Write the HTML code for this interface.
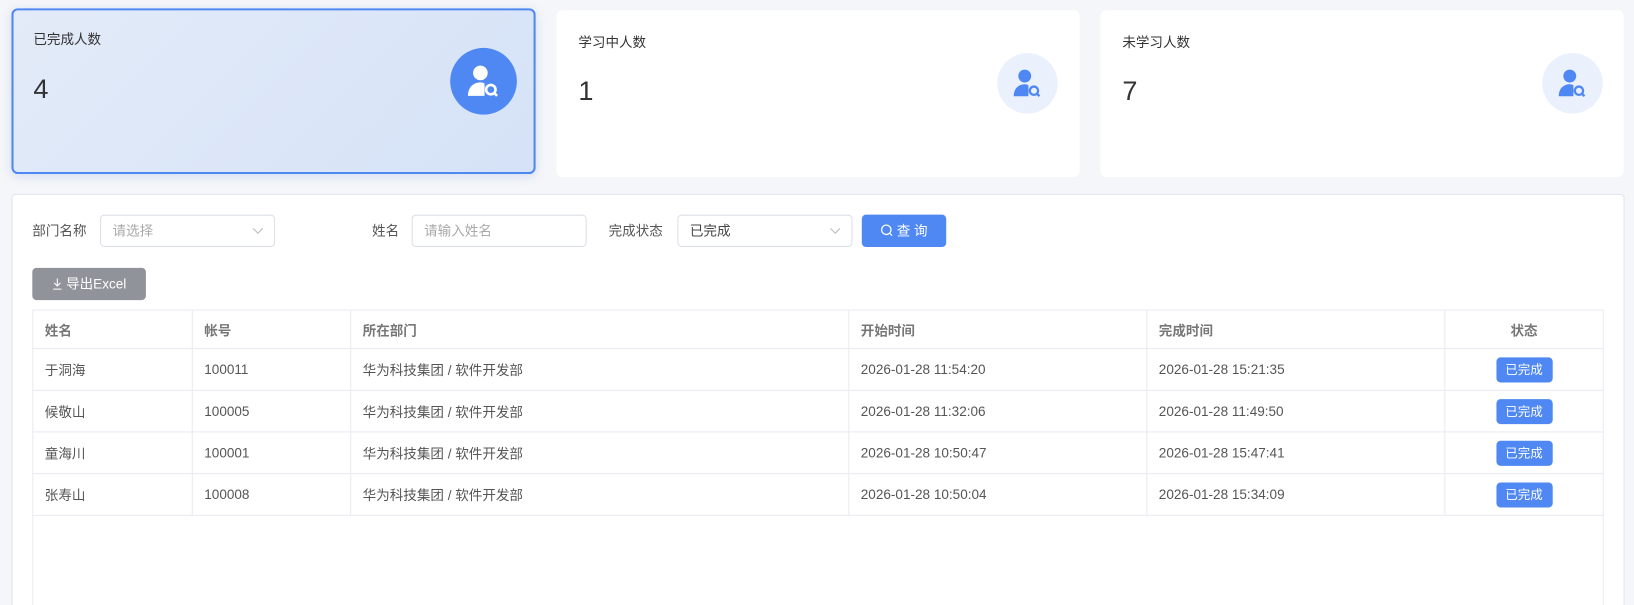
<!DOCTYPE html>
<html><head><meta charset="utf-8"><style>
*{box-sizing:border-box;margin:0;padding:0}
html,body{width:1634px;height:605px;overflow:hidden;background:#f5f6f9}
#w{width:1568px;height:581px;overflow:hidden;transform:scale(1.04209);transform-origin:0 0;position:relative;font-family:"Liberation Sans","Noto Sans CJK SC",sans-serif;color:#333}
.abs{position:absolute}
.card{position:absolute;background:#fff;border-radius:6px}
.card .t{position:absolute;left:21px;top:20px;font-size:13px;color:#333}
.card .n{position:absolute;left:21px;top:62px;font-size:26px;color:#333}
.circ{position:absolute;border-radius:50%;display:flex;align-items:center;justify-content:center}
.lbl{position:absolute;font-size:13px;color:#555;line-height:31px}
.inp{position:absolute;height:31px;border:1px solid #dcdfe6;border-radius:4px;background:#fff;font-size:13px;padding-left:11px;line-height:29px;color:#aaa}
.chev{position:absolute;right:12px;top:9px;width:7px;height:7px;border-right:1px solid #bbb;border-bottom:1px solid #bbb;transform:rotate(45deg)}
table{position:absolute;left:31px;top:297px;width:1508px;border-collapse:collapse;font-size:13px}
td,th{border:1px solid #e8eaf2;height:40px;padding-left:11px;text-align:left;color:#555;font-weight:normal}
th{height:37px;color:#777;font-weight:bold}
.tag{display:inline-block;background:#4f88f2;color:#fff;font-size:12px;border-radius:4px;width:54px;height:24px;line-height:24px;text-align:center}
</style></head><body><div id="w">
<div class="card" style="left:11px;top:8px;width:503px;height:159px;border:2px solid #4f88f2;background:linear-gradient(135deg,#e3ebf8,#d5e2f7);box-shadow:0 2px 10px rgba(80,130,220,.2)">
<div class="t" style="left:19px;top:17px">已完成人数</div><div class="n" style="left:19px;top:60px">4</div>
<div class="circ" style="left:419px;top:36px;width:64px;height:64px;background:#4f88f2">
<svg width="34" height="34" viewBox="0 0 34 34"><circle cx="14" cy="9" r="7" fill="#fff"/><path d="M2 31 C2 22 8 18 14 18 C16 18 17 18.5 18 19 L18 31 Z" fill="#fff"/><circle cx="24" cy="25" r="4.5" fill="none" stroke="#fff" stroke-width="2.5"/><path d="M27 28 L30 31" stroke="#fff" stroke-width="2.5"/></svg></div>
</div>
<div class="card" style="left:534px;top:10px;width:502px;height:160px">
<div class="t">学习中人数</div><div class="n">1</div>
<div class="circ" style="left:423px;top:41px;width:58px;height:58px;background:#eaf1fd">
<svg width="30" height="30" viewBox="0 0 34 34"><circle cx="14" cy="9" r="7" fill="#4f88f2"/><path d="M2 31 C2 22 8 18 14 18 C16 18 17 18.5 18 19 L18 31 Z" fill="#4f88f2"/><circle cx="24" cy="25" r="4.5" fill="none" stroke="#4f88f2" stroke-width="2.5"/><path d="M27 28 L30 31" stroke="#4f88f2" stroke-width="2.5"/></svg></div>
</div>
<div class="card" style="left:1056px;top:10px;width:502px;height:160px">
<div class="t">未学习人数</div><div class="n">7</div>
<div class="circ" style="left:424px;top:41px;width:58px;height:58px;background:#eaf1fd">
<svg width="30" height="30" viewBox="0 0 34 34"><circle cx="14" cy="9" r="7" fill="#4f88f2"/><path d="M2 31 C2 22 8 18 14 18 C16 18 17 18.5 18 19 L18 31 Z" fill="#4f88f2"/><circle cx="24" cy="25" r="4.5" fill="none" stroke="#4f88f2" stroke-width="2.5"/><path d="M27 28 L30 31" stroke="#4f88f2" stroke-width="2.5"/></svg></div>
</div>
<div class="abs" style="left:11px;top:186px;width:1548px;height:395px;background:#fff;border:1px solid #dfe3ec;border-bottom:none;border-radius:4px 4px 0 0"></div>
<div class="lbl" style="left:31px;top:206px">部门名称</div>
<div class="inp" style="left:96px;top:206px;width:168px">请选择<span class="chev"></span></div>
<div class="lbl" style="left:357px;top:206px">姓名</div>
<div class="inp" style="left:395px;top:206px;width:168px">请输入姓名</div>
<div class="lbl" style="left:584px;top:206px">完成状态</div>
<div class="inp" style="left:650px;top:206px;width:168px;color:#444">已完成<span class="chev"></span></div>
<div class="abs" style="left:827px;top:206px;width:81px;height:31px;background:#4f88f2;border-radius:4px;color:#fff;font-size:13px;line-height:31px;text-align:center">
<svg width="12" height="12" viewBox="0 0 12 12" style="vertical-align:-1px"><circle cx="5.5" cy="5.5" r="4.5" fill="none" stroke="#fff" stroke-width="1.2"/><path d="M9 9 L11 11" stroke="#fff" stroke-width="1.2"/></svg> 查 询</div>
<div class="abs" style="left:31px;top:257px;width:109px;height:31px;background:#909399;border-radius:4px;color:#fff;font-size:13px;line-height:31px;text-align:center">
<svg width="10" height="11" viewBox="0 0 10 11" style="vertical-align:-1px"><path d="M5 0 V7 M2 4.5 L5 7.5 L8 4.5 M1 10.5 H9" stroke="#fff" fill="none"/></svg> 导出Excel</div>
<table>
<tr><th style="width:153px">姓名</th><th style="width:152px">帐号</th><th style="width:478px">所在部门</th><th style="width:286px">开始时间</th><th style="width:286px">完成时间</th><th style="text-align:center;padding:0">状态</th></tr>
<tr><td>于洞海</td><td>100011</td><td>华为科技集团 / 软件开发部</td><td>2026-01-28 11:54:20</td><td>2026-01-28 15:21:35</td><td style="text-align:center;padding:0"><span class="tag">已完成</span></td></tr>
<tr><td>候敬山</td><td>100005</td><td>华为科技集团 / 软件开发部</td><td>2026-01-28 11:32:06</td><td>2026-01-28 11:49:50</td><td style="text-align:center;padding:0"><span class="tag">已完成</span></td></tr>
<tr><td>童海川</td><td>100001</td><td>华为科技集团 / 软件开发部</td><td>2026-01-28 10:50:47</td><td>2026-01-28 15:47:41</td><td style="text-align:center;padding:0"><span class="tag">已完成</span></td></tr>
<tr><td>张寿山</td><td>100008</td><td>华为科技集团 / 软件开发部</td><td>2026-01-28 10:50:04</td><td>2026-01-28 15:34:09</td><td style="text-align:center;padding:0"><span class="tag">已完成</span></td></tr>
</table>
<div class="abs" style="left:31px;top:494px;width:1508px;height:87px;border-left:1px solid #e8eaf2;border-right:1px solid #e8eaf2"></div>
</div></body></html>
